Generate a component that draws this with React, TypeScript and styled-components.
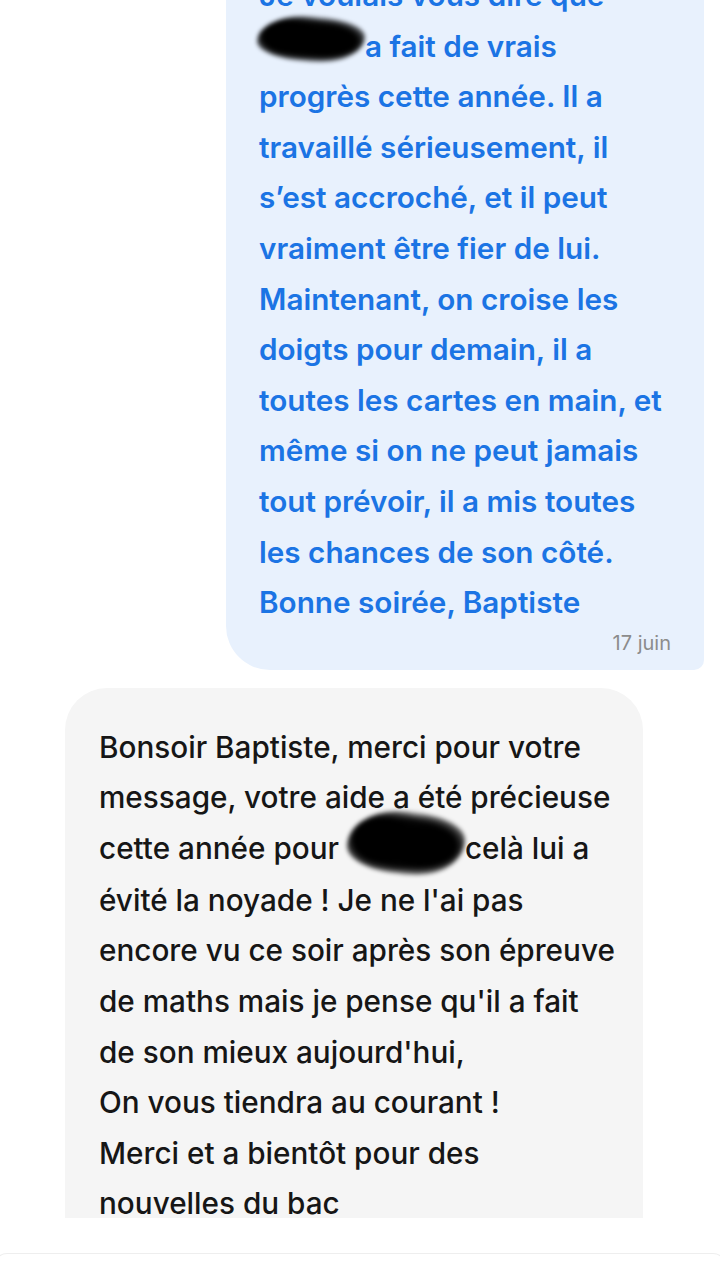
import React from 'react';
import styled, { createGlobalStyle } from 'styled-components';

const GlobalStyle = createGlobalStyle`
  html, body {
    margin: 0;
    padding: 0;
    background: #ffffff;
  }
  body {
    font-family: 'Inter', 'Noto Sans', sans-serif;
  }
`;

const Screen = styled.div`
  display: flex;
  flex-direction: column;
  width: 720px;
  height: 1266px;
  overflow: hidden;
  background: #ffffff;
`;

const Thread = styled.div`
  display: flex;
  flex-direction: column;
  gap: 18px;
  height: 1218px;
  flex-shrink: 0;
  overflow: hidden;
`;

const Bubble = styled.div<{ $mine?: boolean }>`
  box-sizing: border-box;
  flex-shrink: 0;
  font-size: 29.7px;
  line-height: 50.6px;
  white-space: nowrap;
  ${({ $mine }) =>
    $mine
      ? `
    align-self: flex-end;
    width: 478px;
    margin: -64px 16px 0 0;
    padding: 34px 33px 15px 33px;
    background: #e8f1fd;
    color: #1b74e4;
    font-weight: 600;
    border-radius: 44px 44px 10px 44px;
  `
      : `
    align-self: flex-start;
    width: 578px;
    margin-left: 65px;
    padding: 34px 34px 34px 34px;
    background: #f5f5f5;
    color: #161616;
    font-weight: 500;
    border-radius: 42px 42px 42px 10px;
  `}
`;

const Line = styled.div``;

const Stamp = styled.div`
  margin-top: 3px;
  text-align: right;
  font-size: 20px;
  line-height: 24px;
  font-weight: 400;
  color: #8c8c8c;
`;

// scribbled-out name: a fuzzy dark blot sitting in the text flow
const Redacted = styled.span<{ $w: number; $h: number }>`
  display: inline-block;
  width: ${({ $w }) => $w}px;
  height: ${({ $h }) => $h}px;
  vertical-align: middle;
  background:
    radial-gradient(ellipse 40% 55% at 30% 45%, #000 60%, rgba(0, 0, 0, 0) 100%),
    radial-gradient(ellipse 45% 50% at 65% 55%, #000 60%, rgba(0, 0, 0, 0) 100%),
    radial-gradient(ellipse at center, rgba(0, 0, 0, 0.9) 50%, rgba(0, 0, 0, 0) 78%);
  border-radius: 42% 58% 40% 60% / 55% 45% 55% 45%;
  filter: blur(2px);
`;

const Composer = styled.div`
  flex: 1;
  margin: 35px -6px 0;
  border: 1px solid #eeeeee;
  border-bottom: none;
  border-radius: 28px 28px 0 0;
  background: #ffffff;
`;

const sentLines: React.ReactNode[] = [
  'Je voulais vous dire que',
  <>
    <Redacted $w={108} $h={46} style={{ marginLeft: -2, marginTop: -18 }} />a fait de vrais
  </>,
  'progrès cette année. Il a',
  'travaillé sérieusement, il',
  'sʼest accroché, et il peut',
  'vraiment être fier de lui.',
  'Maintenant, on croise les',
  'doigts pour demain, il a',
  'toutes les cartes en main, et',
  'même si on ne peut jamais',
  'tout prévoir, il a mis toutes',
  'les chances de son côté.',
  'Bonne soirée, Baptiste',
];

const receivedLines: React.ReactNode[] = [
  'Bonsoir Baptiste, merci pour votre',
  'message, votre aide a été précieuse',
  <>
    cette année pour <Redacted $w={118} $h={64} style={{ marginTop: -16 }} />celà lui a
  </>,
  "évité la noyade ! Je ne l'ai pas",
  'encore vu ce soir après son épreuve',
  "de maths mais je pense qu'il a fait",
  "de son mieux aujourd'hui,",
  'On vous tiendra au courant !',
  'Merci et a bientôt pour des',
  'nouvelles du bac',
];

export default function App() {
  return (
    <>
      <GlobalStyle />
      <Screen>
        <Thread>
          <Bubble $mine>
            {sentLines.map((l, i) => (
              <Line key={i}>{l}</Line>
            ))}
            <Stamp>17 juin</Stamp>
          </Bubble>
          <Bubble>
            {receivedLines.map((l, i) => (
              <Line key={i}>{l}</Line>
            ))}
          </Bubble>
        </Thread>
        <Composer />
      </Screen>
    </>
  );
}
